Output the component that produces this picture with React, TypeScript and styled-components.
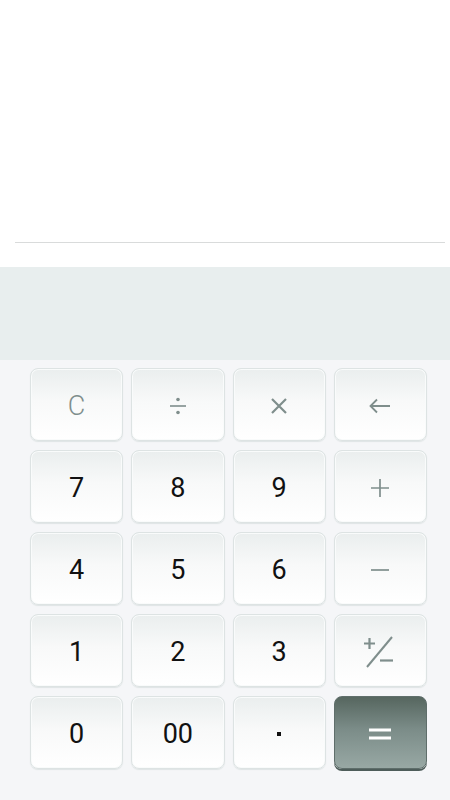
import styled, { createGlobalStyle } from "styled-components";

const GlobalStyle = createGlobalStyle`
  html, body {
    margin: 0;
    padding: 0;
    background: #ffffff;
    font-family: Roboto, "Noto Sans", sans-serif;
  }
`;

type Kind = "digit" | "op" | "equals";

interface Key {
  label: string;
  kind: Kind;
  icon?: React.ReactNode;
}

const stroke = "#7f8e8c";

const TimesIcon = () => (
  <svg width="20" height="20" viewBox="0 0 20 20">
    <path d="M3 3 L17 17 M17 3 L3 17" stroke={stroke} strokeWidth="2.2" fill="none" />
  </svg>
);

const DivideIcon = () => (
  <svg width="20" height="20" viewBox="0 0 20 20">
    <path d="M2 10 H18" stroke={stroke} strokeWidth="1.6" />
    <circle cx="10" cy="3.5" r="1.8" fill={stroke} />
    <circle cx="10" cy="16.5" r="1.8" fill={stroke} />
  </svg>
);

const BackIcon = () => (
  <svg width="24" height="16" viewBox="0 0 24 16">
    <path d="M22 8 H3 M9 1.5 L2.5 8 L9 14.5" stroke={stroke} strokeWidth="1.8" fill="none" />
  </svg>
);

const PlusIcon = () => (
  <svg width="20" height="20" viewBox="0 0 20 20">
    <path d="M1 10 H19 M10 1 V19" stroke={stroke} strokeWidth="1.7" />
  </svg>
);

const MinusIcon = () => (
  <svg width="20" height="4" viewBox="0 0 20 4">
    <path d="M1 2 H19" stroke={stroke} strokeWidth="1.7" />
  </svg>
);

const SignIcon = () => (
  <svg width="34" height="32" viewBox="0 0 34 32">
    <path d="M1 7.5 H12 M6.5 2 V13" stroke={stroke} strokeWidth="2.2" />
    <path d="M4 31 L29 1" stroke={stroke} strokeWidth="2" />
    <path d="M17 24.5 H30" stroke={stroke} strokeWidth="2.2" />
  </svg>
);

const EqualsIcon = () => (
  <svg width="22" height="12" viewBox="0 0 22 12">
    <path d="M0 2 H22 M0 10 H22" stroke="#ffffff" strokeWidth="3" />
  </svg>
);

const PointIcon = () => (
  <svg width="4" height="4" viewBox="0 0 4 4">
    <rect width="4" height="4" fill="#111111" />
  </svg>
);

const keys: Key[] = [
  { label: "C", kind: "op" },
  { label: "÷", kind: "op", icon: <DivideIcon /> },
  { label: "×", kind: "op", icon: <TimesIcon /> },
  { label: "←", kind: "op", icon: <BackIcon /> },
  { label: "7", kind: "digit" },
  { label: "8", kind: "digit" },
  { label: "9", kind: "digit" },
  { label: "+", kind: "op", icon: <PlusIcon /> },
  { label: "4", kind: "digit" },
  { label: "5", kind: "digit" },
  { label: "6", kind: "digit" },
  { label: "−", kind: "op", icon: <MinusIcon /> },
  { label: "1", kind: "digit" },
  { label: "2", kind: "digit" },
  { label: "3", kind: "digit" },
  { label: "±", kind: "op", icon: <SignIcon /> },
  { label: "0", kind: "digit" },
  { label: "00", kind: "digit" },
  { label: ".", kind: "digit", icon: <PointIcon /> },
  { label: "=", kind: "equals", icon: <EqualsIcon /> },
];

export default function App() {
  return (
    <>
      <GlobalStyle />
      <Screen>
        <InputArea>
          <Divider />
        </InputArea>
        <ResultPanel />
        <Keypad>
          {keys.map((key) => (
            <KeyButton key={key.label} $kind={key.kind} aria-label={key.label}>
              {key.icon ?? key.label}
            </KeyButton>
          ))}
        </Keypad>
      </Screen>
    </>
  );
}

const Screen = styled.div`
  width: 450px;
  height: 800px;
  display: flex;
  flex-direction: column;
  background: #f5f6f8;
`;

const InputArea = styled.div`
  height: 267px;
  background: #ffffff;
  display: flex;
  flex-direction: column;
  justify-content: flex-end;
  padding: 0 5px 24px 15px;
  box-sizing: border-box;
`;

const Divider = styled.div`
  height: 1px;
  background: #d9dbdb;
`;

const ResultPanel = styled.div`
  height: 93px;
  background: #e8eeee;
`;

const Keypad = styled.div`
  display: grid;
  grid-template-columns: repeat(4, 1fr);
  grid-auto-rows: 73px;
  column-gap: 8px;
  row-gap: 9px;
  padding: 8px 23px 0 30px;
`;

const KeyButton = styled.button<{ $kind: Kind }>`
  display: flex;
  align-items: center;
  justify-content: center;
  margin: 0;
  padding: 2px 0 0;
  border-radius: 8px;
  font-family: Roboto, "Noto Sans", sans-serif;
  font-size: 27px;
  font-weight: ${(p) => (p.$kind === "op" ? 300 : 400)};
  color: ${(p) => (p.$kind === "op" ? "#7f8e8c" : "#111111")};
  border: 1px solid ${(p) => (p.$kind === "equals" ? "#5f6e6b" : "#dde3e3")};
  background: ${(p) =>
    p.$kind === "equals"
      ? "linear-gradient(to bottom, #56665f 0%, #7b8c88 45%, #98a8a4 100%)"
      : "linear-gradient(to bottom, #eaeeee 0%, #f8f9f9 45%, #ffffff 100%)"};
  box-shadow: ${(p) =>
    p.$kind === "equals"
      ? "0 2px 0 #4e5d5a"
      : "0 1px 1px #dfe5e5, inset 0 0 0 1px #f9fbfb"};
  cursor: pointer;
`;
